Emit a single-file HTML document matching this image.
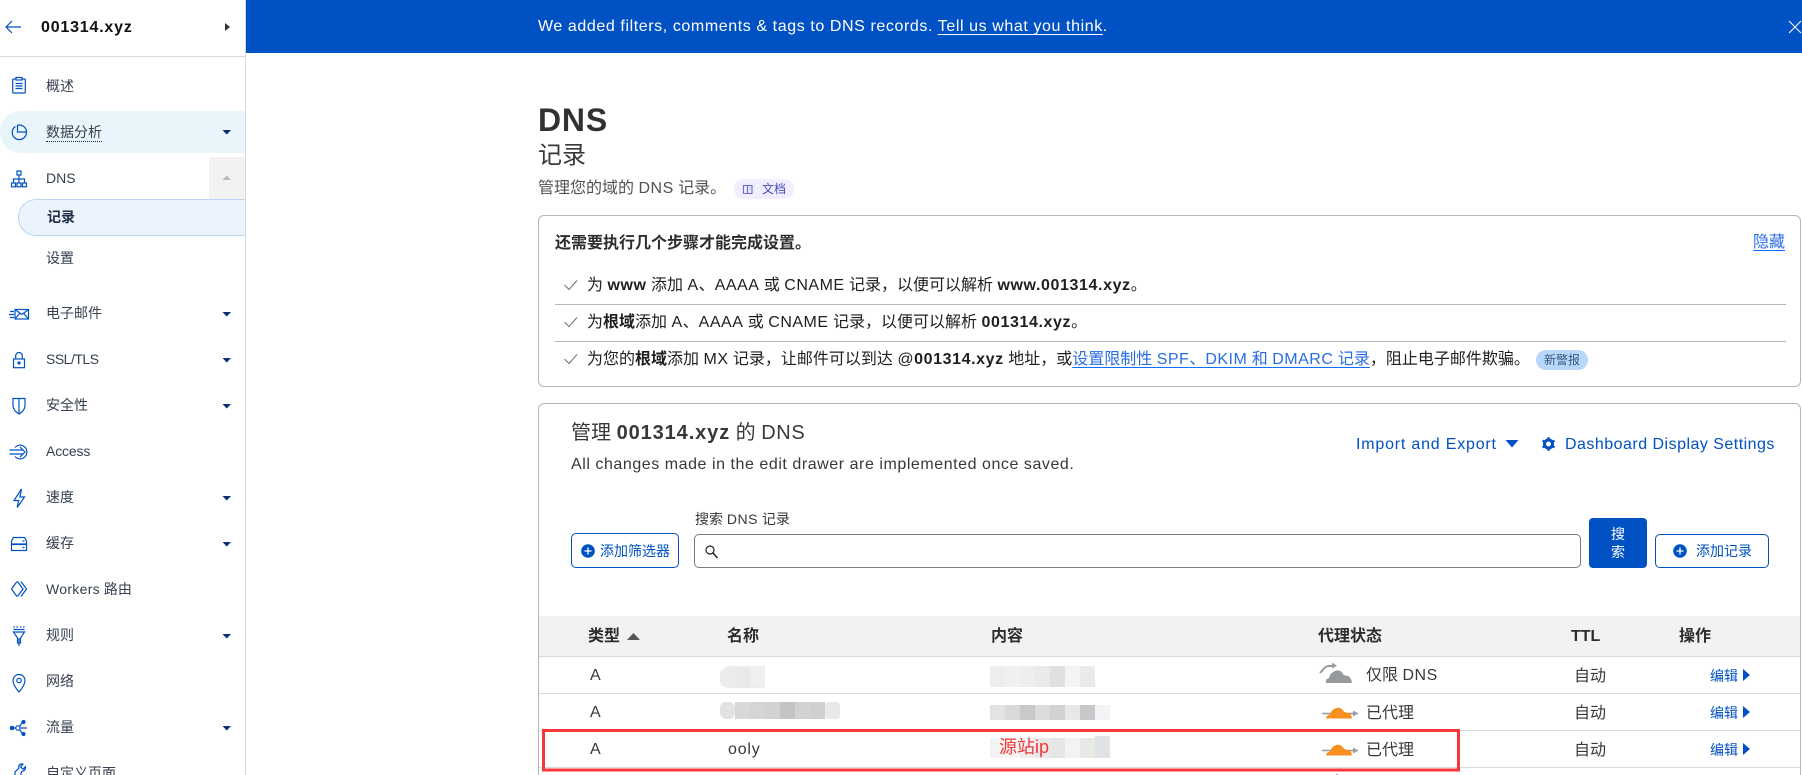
<!DOCTYPE html>
<html lang="zh">
<head>
<meta charset="utf-8">
<title>DNS</title>
<style>
html{margin:0;padding:0;background:#fff;overflow:hidden;width:1802px;height:775px}
body{margin:0;padding:0;background:#fff;position:relative;width:1802px;height:775px;overflow:hidden;font-family:"Liberation Sans","Noto Sans CJK SC",sans-serif;font-size:16px;color:#1d1f20}
.t{position:absolute;white-space:nowrap;line-height:24px;height:24px}
.b{position:absolute;box-sizing:border-box}
i.l{font-style:normal;letter-spacing:.5px}
b i.l{letter-spacing:.6px}
.n{font-size:14px;color:#36404f;left:46px}
.g{color:#36393a}
b{font-weight:700}
.lk{color:#2a6ce8;text-decoration:underline;text-decoration-color:#0f6fff;text-underline-offset:3px}
.bl{color:#0051c3}
.th{font-weight:700;color:#2b2d2e}
svg{position:absolute;left:0;top:0}
</style>
</head>
<body>
<!-- sidebar shapes -->
<div class="b" style="left:245px;top:0;width:1px;height:775px;background:#d9d9d9"></div>
<div class="b" style="left:0;top:56px;width:245px;height:1px;background:#d9d9d9"></div>
<div class="b" style="left:0;top:111px;width:245px;height:42px;background:#e8f5fa;border-radius:21px 0 0 21px"></div>
<div class="b" style="left:209px;top:157px;width:36px;height:42px;background:#f2f2f2"></div>
<div class="b" style="left:18px;top:199px;width:227px;height:37px;background:#ebf3fc;border:1px solid #bdd5f5;border-right:0;border-radius:18px 0 0 18px"></div>

<!-- banner -->
<div class="b" style="left:246px;top:0;width:1556px;height:53px;background:#0051c3"></div>
<div class="t" style="left:538px;top:15px;color:#fff;letter-spacing:.59px">We added filters, comments &amp; tags to DNS records. <span style="text-decoration:underline;text-underline-offset:3px">Tell us what you think</span>.</div>

<!-- sidebar text -->
<div class="t" style="left:41px;top:16px;font-weight:700;letter-spacing:.8px;color:#111">001314.xyz</div>
<div class="t n" style="top:74px">概述</div>
<div class="t n" style="top:120px"><span style="border-bottom:1px dotted #0a2a66;padding-bottom:1px">数据分析</span></div>
<div class="t n" style="top:166px">DNS</div>
<div class="t n" style="top:205px;left:47px;font-weight:700;color:#1f2f4a">记录</div>
<div class="t n" style="top:246px">设置</div>
<div class="t n" style="top:301px">电子邮件</div>
<div class="t n" style="top:347px;letter-spacing:-.5px">SSL/TLS</div>
<div class="t n" style="top:393px">安全性</div>
<div class="t n" style="top:439px;letter-spacing:-.15px">Access</div>
<div class="t n" style="top:485px">速度</div>
<div class="t n" style="top:531px">缓存</div>
<div class="t n" style="top:577px"><span style="letter-spacing:.3px">Workers</span> 路由</div>
<div class="t n" style="top:623px">规则</div>
<div class="t n" style="top:669px">网络</div>
<div class="t n" style="top:715px">流量</div>
<div class="t n" style="top:761px">自定义页面</div>

<!-- heading -->
<div class="t" style="left:538px;top:102px;font-size:32px;line-height:36px;height:36px;font-weight:700;color:#313131;letter-spacing:.8px">DNS</div>
<div class="t" style="left:538px;top:140px;font-size:24px;line-height:32px;height:32px;color:#36393a">记录</div>
<div class="t" style="left:538px;top:177px;color:#4f5255">管理您的域的 <i class="l">DNS</i> 记录。</div>
<div class="b" style="left:734px;top:179px;width:60px;height:20px;background:#f0eeff;border-radius:10px"></div>
<div class="t" style="left:762px;top:177px;font-size:12px;color:#4a4ab8">文档</div>

<!-- card 1 -->
<div class="b" style="left:538px;top:215px;width:1263px;height:172px;border:1px solid #b6b6b6;border-radius:6px"></div>
<div class="t" style="left:555px;top:232px;font-weight:700;color:#2b2d2e">还需要执行几个步骤才能完成设置。</div>
<div class="t lk" style="left:1753px;top:231px">隐藏</div>
<div class="t" style="left:587px;top:274px">为 <b><i class="l">www</i></b> 添加 <i class="l">A</i>、<i class="l">AAAA</i> 或 <i class="l">CNAME</i> 记录&#65292;以便可以解析 <b><i class="l">www.001314.xyz</i></b>。</div>
<div class="b" style="left:555px;top:304px;width:1231px;height:1px;background:#b6b6b6"></div>
<div class="t" style="left:587px;top:311px">为<b>根域</b>添加 <i class="l">A</i>、<i class="l">AAAA</i> 或 <i class="l">CNAME</i> 记录&#65292;以便可以解析 <b><i class="l">001314.xyz</i></b>。</div>
<div class="b" style="left:555px;top:341px;width:1231px;height:1px;background:#b6b6b6"></div>
<div class="t" style="left:587px;top:348px">为您的<b>根域</b>添加 <i class="l">MX</i> 记录&#65292;让邮件可以到达 <i class="l">@</i><b><i class="l">001314.xyz</i></b> 地址&#65292;或<span class="lk">设置限制性 <i class="l">SPF</i>、<i class="l">DKIM</i> 和 <i class="l">DMARC</i> 记录</span>&#65292;阻止电子邮件欺骗。</div>
<div class="b" style="left:1536px;top:350px;width:52px;height:20px;background:#b9d6fb;border-radius:10px"></div>
<div class="t" style="left:1544px;top:348px;font-size:12px;color:#36577f">新警报</div>

<!-- card 2 -->
<div class="b" style="left:538px;top:403px;width:1263px;height:400px;border:1px solid #b6b6b6;border-radius:6px"></div>
<div class="t" style="left:571px;top:421px;font-size:20px;color:#36393a">管理 <b style="letter-spacing:.9px">001314.xyz</b> 的 <i class="l" style="letter-spacing:.6px">DNS</i></div>
<div class="t g" style="left:571px;top:453px;letter-spacing:.55px">All changes made in the edit drawer are implemented once saved.</div>
<div class="t bl" style="left:1356px;top:433px;letter-spacing:.8px">Import and Export</div>
<div class="t bl" style="left:1565px;top:433px;letter-spacing:.48px">Dashboard Display Settings</div>

<!-- search row -->
<div class="t g" style="left:695px;top:507px;font-size:14px">搜索 <i class="l">DNS</i> 记录</div>
<div class="b" style="left:571px;top:533px;width:108px;height:35px;border:1px solid #0051c3;border-radius:5px"></div>
<div class="t bl" style="left:600px;top:539px;font-size:14px">添加筛选器</div>
<div class="b" style="left:694px;top:534px;width:887px;height:34px;border:1px solid #7a7a7a;border-radius:5px"></div>
<div class="b" style="left:1589px;top:518px;width:58px;height:50px;background:#0051c3;border-radius:4px"></div>
<div class="t" style="left:1611px;top:522px;font-size:14px;color:#fff">搜</div>
<div class="t" style="left:1611px;top:540px;font-size:14px;color:#fff">索</div>
<div class="b" style="left:1655px;top:534px;width:114px;height:34px;border:1px solid #0051c3;border-radius:5px"></div>
<div class="t bl" style="left:1696px;top:539px;font-size:14px">添加记录</div>

<!-- table -->
<div class="b" style="left:539px;top:616px;width:1261px;height:41px;background:#f2f2f2;border-bottom:1px solid #d9d9d9"></div>
<div class="t th" style="left:588px;top:625px">类型</div>
<div class="t th" style="left:727px;top:625px">名称</div>
<div class="t th" style="left:991px;top:625px">内容</div>
<div class="t th" style="left:1318px;top:625px">代理状态</div>
<div class="t th" style="left:1571px;top:625px">TTL</div>
<div class="t th" style="left:1679px;top:625px">操作</div>

<div class="b" style="left:539px;top:693px;width:1261px;height:1px;background:#d9d9d9"></div>
<div class="b" style="left:539px;top:730px;width:1261px;height:1px;background:#d9d9d9"></div>
<div class="b" style="left:539px;top:767px;width:1261px;height:1px;background:#d9d9d9"></div>

<div class="t g" style="left:590px;top:664px">A</div>
<div class="t g" style="left:590px;top:701px">A</div>
<div class="t g" style="left:590px;top:738px">A</div>
<div class="t g" style="left:728px;top:738px;letter-spacing:.8px">ooly</div>

<div class="t g" style="left:1366px;top:664px">仅限 <i class="l">DNS</i></div>
<div class="t g" style="left:1366px;top:702px">已代理</div>
<div class="t g" style="left:1366px;top:739px">已代理</div>
<div class="t g" style="left:1574px;top:665px">自动</div>
<div class="t g" style="left:1574px;top:702px">自动</div>
<div class="t g" style="left:1574px;top:739px">自动</div>
<div class="t bl" style="left:1710px;top:664px;font-size:14px">编辑</div>
<div class="t bl" style="left:1710px;top:701px;font-size:14px">编辑</div>
<div class="t bl" style="left:1710px;top:738px;font-size:14px">编辑</div>

<svg width="1802" height="775" viewBox="0 0 1802 775" xmlns="http://www.w3.org/2000/svg">
  <!-- blurred cells -->
  <g>
    <path d="M720 672q4-5 10-6h34v22h-34q-8 0-10-6z" fill="#ececec"/>
    <rect x="735" y="668" width="15" height="20" fill="#e8e9e9"/>
    <rect x="750" y="666" width="15" height="20" fill="#efefef"/>
    <rect x="720" y="702" width="15" height="17" rx="6" fill="#e2e2e2"/>
    <rect x="735" y="702" width="15" height="17" fill="#d8d8d8"/>
    <rect x="750" y="702" width="15" height="17" fill="#d5d5d5"/>
    <rect x="765" y="702" width="15" height="17" fill="#d2d2d2"/>
    <rect x="780" y="702" width="15" height="17" fill="#c4c4c4"/>
    <rect x="795" y="702" width="15" height="17" fill="#d2d2d2"/>
    <rect x="810" y="702" width="15" height="17" fill="#cfcfcf"/>
    <rect x="825" y="702" width="15" height="17" rx="4" fill="#e8e8e8"/>

    <rect x="990" y="666" width="15" height="21" fill="#ededed"/>
    <rect x="1005" y="666" width="15" height="21" fill="#f0f0f0"/>
    <rect x="1020" y="666" width="15" height="21" fill="#eceef0"/>
    <rect x="1035" y="666" width="15" height="21" fill="#e8eaec"/>
    <rect x="1050" y="666" width="15" height="21" fill="#dfe0e2"/>
    <rect x="1065" y="666" width="15" height="21" fill="#f4f4f4"/>
    <rect x="1080" y="666" width="15" height="21" fill="#eaeaea"/>

    <rect x="990" y="705" width="15" height="15" fill="#e3e3e3"/>
    <rect x="1005" y="705" width="15" height="15" fill="#d9d9d9"/>
    <rect x="1020" y="705" width="15" height="15" fill="#c9c9c9"/>
    <rect x="1035" y="705" width="15" height="15" fill="#dcdcdc"/>
    <rect x="1050" y="705" width="15" height="15" fill="#d2d2d2"/>
    <rect x="1065" y="705" width="15" height="15" fill="#e8e8e8"/>
    <rect x="1080" y="705" width="15" height="15" fill="#c8c8c8"/>
    <rect x="1095" y="705" width="15" height="15" fill="#f1f3f6"/>

    <rect x="990" y="738" width="15" height="20" fill="#f3f3f3"/>
    <rect x="1005" y="738" width="15" height="20" fill="#f5f5f5"/>
    <rect x="1020" y="738" width="15" height="20" fill="#eeeeee"/>
    <rect x="1035" y="738" width="15" height="20" fill="#e9e9e9"/>
    <rect x="1050" y="738" width="15" height="20" fill="#e6e6e6"/>
    <rect x="1065" y="738" width="15" height="20" fill="#f3f3f3"/>
    <rect x="1080" y="738" width="15" height="20" fill="#e8e8e4"/>
    <rect x="1095" y="736" width="15" height="22" fill="#dfe3e6"/>
  </g>

  <!-- sidebar icons -->
  <g fill="none" stroke="#0051c3" stroke-width="1.2">
    <path d="M6 27H21M12 21l-6 6 6 6"/>
    <!-- clipboard -->
    <rect x="12.7" y="79" width="12.6" height="14" rx="1"/>
    <rect x="16" y="77.5" width="6" height="2.5" fill="#fff"/>
    <path d="M15.5 83.5h7M15.5 86h7M15.5 88.5h7"/>
    <!-- pie -->
    <path d="M15.5 126.500a7.100 7.100 0 1 0 10.900 6.200"/>
    <path d="M17.500 125.300v6.700h9a7.100 7.100 0 0 0-9-6.700z"/>
    <!-- network -->
    <rect x="17" y="171" width="4" height="4"/>
    <path d="M19 175v8M13.500 183v-4h11v4"/>
    <rect x="11.500" y="183" width="4" height="3.800"/>
    <rect x="17" y="183" width="4" height="3.800"/>
    <rect x="22.500" y="183" width="4" height="3.800"/>
    <!-- mail -->
    <rect x="15" y="309.500" width="13.500" height="9.500"/>
    <path d="M15 309.500l6.800 5 6.700-5M15 319l5-6M28.500 319l-5-6M10 311.500h4M9 314.500h5M10 317.500h4"/>
    <!-- lock -->
    <rect x="13.500" y="359" width="11" height="8.700"/>
    <path d="M15.700 359v-3.200a3.300 3.300 0 0 1 6.600 0V359"/>
    <circle cx="19" cy="363" r="1" fill="#0051c3"/>
    <!-- shield -->
    <path d="M13 398.500h12v7q0 5-6 8.500q-6-3.500-6-8.500z"/>
    <path d="M19 398.500v15"/>
    <!-- access -->
    <path d="M15 447.500a6.800 6.800 0 1 1 0 9M9.500 450h14M9.500 454h14M20 447l5 5-5 5"/>
    <!-- bolt -->
    <path d="M21.500 489l-7.500 11.500h4.600l-1.400 7 7.300-10.500h-4.600z"/>
    <!-- cache -->
    <path d="M13.500 537.500h11l2 3.500v3h-15v-3z"/>
    <rect x="11.500" y="544.500" width="15" height="6"/>
    <path d="M22.500 547.500h2M22.500 541h2"/>
    <!-- workers -->
    <path d="M17 581.500l-5.500 7.500 5.500 7.500M21 581.500l5.500 7.500-5.500 7.500M17.500 581.500l5.500 7.500-5.500 7.500"/>
    <!-- rules -->
    <path d="M13.500 632h11l-4 6v5h-3v-5z"/>
    <path d="M13.500 627h1.500M16.500 627h1.500M20 627h1.500M23 627h1.500M13.500 629.500h11M19 638v8"/>
    <!-- pin -->
    <path d="M19 692q-6-7-6-11.500a6 6 0 0 1 12 0q0 4.500-6 11.500z"/>
    <circle cx="19" cy="680.500" r="2.200"/>
    <!-- traffic -->
    <circle cx="12" cy="728" r="1.700" fill="#0051c3"/>
    <circle cx="18" cy="728" r="2.200"/>
    <path d="M14 728h2M19.500 726.500l3-4.500h3M19.500 729.500l3 4.500h3M20.500 728h6.500"/>
    <circle cx="23.500" cy="722" r="1.500" fill="#0051c3"/>
    <circle cx="23.500" cy="734" r="1.500" fill="#0051c3"/>
    <!-- wrench -->
    <path d="M15 775v-3l4-4q-1-3 2-4l2 .2-2.500 2.500 2.500 2.500 2.500-2.500q.5 4-4 5l-1 3.800"/>
  </g>

  <!-- carets sidebar -->
  <g fill="#0a2e6e">
    <path d="M225 23l5 4-5 4z" fill="#333"/>
    <path d="M222.500 130h8.500l-4.250 4.500z"/>
    <path d="M222.500 312h8.500l-4.250 4.500z"/>
    <path d="M222.500 358h8.500l-4.250 4.500z"/>
    <path d="M222.500 404h8.500l-4.250 4.500z"/>
    <path d="M222.500 496h8.500l-4.250 4.500z"/>
    <path d="M222.500 542h8.500l-4.250 4.500z"/>
    <path d="M222.500 634h8.500l-4.250 4.500z"/>
    <path d="M222.500 726h8.500l-4.250 4.500z"/>
    <path d="M222.500 180h8.500l-4.250-4.500z" fill="#b4bcc6"/>
  </g>

  <!-- doc badge icon -->
  <g fill="none" stroke="#6a6ad0" stroke-width="1.100">
    <path d="M743.500 185.500h4v8h-4zM747.500 185.500h4.500v8h-4.500"/>
    <path d="M749.500 187.500h1M749.500 189.500h1" stroke-width=".8"/>
  </g>

  <!-- checks -->
  <g fill="none" stroke="#6b6f73" stroke-width="1">
    <path d="M564.500 285l4.500 4.500 8-9"/>
    <path d="M564.500 322l4.500 4.500 8-9"/>
    <path d="M564.500 359l4.500 4.500 8-9"/>
  </g>

  <!-- top-right close -->
  <path d="M1789 21l12 12M1801 21l-12 12" stroke="#fff" stroke-width="1" fill="none"/>

  <!-- import caret + gear -->
  <path d="M1505.500 440h13l-6.500 7.500z" fill="#0051c3"/>
  <g transform="translate(1548.500 444)">
    <circle r="4" fill="none" stroke="#0051c3" stroke-width="3"/>
    <g stroke="#0051c3" stroke-width="2.400">
      <path d="M0-6.800V-4.500M0 4.500V6.800M-5.900-3.400L-3.900-2.200M3.900 2.200L5.900 3.400M-5.900 3.400L-3.900 2.200M3.900-2.200L5.900-3.400"/>
    </g>
  </g>

  <!-- plus circles -->
  <circle cx="588" cy="551" r="6.800" fill="#0051c3"/>
  <path d="M584.500 551h7M588 547.500v7" stroke="#fff" stroke-width="1.300"/>
  <circle cx="1680" cy="551" r="6.800" fill="#0051c3"/>
  <path d="M1676.500 551h7M1680 547.500v7" stroke="#fff" stroke-width="1.300"/>

  <!-- magnifier -->
  <circle cx="710" cy="550" r="4" fill="none" stroke="#222" stroke-width="1.200"/>
  <path d="M713 553l4.500 5" stroke="#222" stroke-width="1.500"/>

  <!-- sort caret -->
  <path d="M627 640l6.500-7 6.500 7z" fill="#555"/>

  <!-- clouds -->
  <g>
    <path d="M1320 673l4.500-5q2-2 4.500-2h4" fill="none" stroke="#979a9d" stroke-width="2"/>
    <path d="M1332 662.500l5 3.300-5 2.700z" fill="#979a9d"/>
    <path d="M1326 683q-1-4 3-5 1-5 6-7 5-2 8 3 1 1.500 3 1.500 5 .5 6 7.500z" fill="#979a9d"/>

    <path d="M1322 713.500h36" stroke="#9a9a9a" stroke-width="1.600"/>
    <path d="M1353 710.500l5 3-5 3z" fill="#9a9a9a"/>
    <path d="M1326 718.500q.5-3.500 4-4 1.500-4.500 5-6 5-2.500 8.500 2.500 1 1.500 3 1.500 5 .5 5.500 6z" fill="#f98f1e"/>

    <path d="M1322 750.500h36" stroke="#9a9a9a" stroke-width="1.600"/>
    <path d="M1353 747.500l5 3-5 3z" fill="#9a9a9a"/>
    <path d="M1326 755.500q.5-3.500 4-4 1.500-4.500 5-6 5-2.500 8.500 2.500 1 1.500 3 1.500 5 .5 5.500 6z" fill="#f98f1e"/>
  </g>

  <!-- edit triangles -->
  <path d="M1743 669l7 6-7 6z" fill="#0051c3"/>
  <path d="M1743 706l7 6-7 6z" fill="#0051c3"/>
  <path d="M1743 743l7 6-7 6z" fill="#0051c3"/>

  <!-- red box -->
  <rect x="543.500" y="730.500" width="915" height="39.500" fill="none" stroke="#f5363a" stroke-width="3"/>
  <rect x="1336" y="774" width="2" height="1" fill="#aaa"/>
</svg>

<div class="t" style="left:999px;top:735px;font-size:18px;color:#f5363a">源站ip</div>
</body>
</html>
